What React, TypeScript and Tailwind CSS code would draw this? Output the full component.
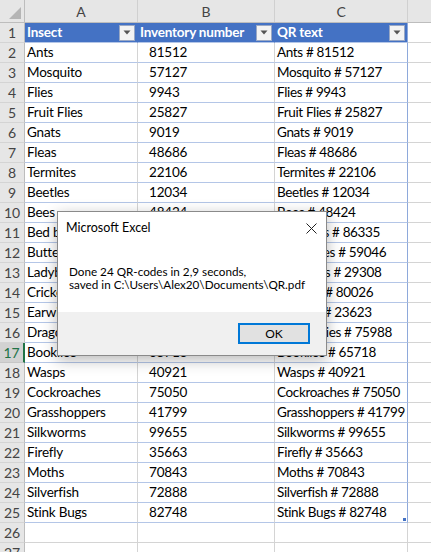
import React from "react";

const rows: [string, string][] = [
  ["Ants", "81512"],
  ["Mosquito", "57127"],
  ["Flies", "9943"],
  ["Fruit Flies", "25827"],
  ["Gnats", "9019"],
  ["Fleas", "48686"],
  ["Termites", "22106"],
  ["Beetles", "12034"],
  ["Bees", "48424"],
  ["Bed bugs", "86335"],
  ["Butterflies", "59046"],
  ["Ladybugs", "29308"],
  ["Crickets", "80026"],
  ["Earwigs", "23623"],
  ["Dragonflies", "75988"],
  ["Booklice", "65718"],
  ["Wasps", "40921"],
  ["Cockroaches", "75050"],
  ["Grasshoppers", "41799"],
  ["Silkworms", "99655"],
  ["Firefly", "35663"],
  ["Moths", "70843"],
  ["Silverfish", "72888"],
  ["Stink Bugs", "82748"],
];

const cellFont = { fontFamily: "Lato, 'Open Sans', sans-serif" };

function FilterButton() {
  return (
    <div className="flex h-[16px] w-[16px] shrink-0 items-center justify-center border border-[#9aa8c4] bg-[#f3f3f3]">
      <svg width="8" height="5" viewBox="0 0 8 5">
        <path d="M0.5 0.5 L7.5 0.5 L4 4.5 Z" fill="#555" />
      </svg>
    </div>
  );
}

function RowHead({ n, active }: { n: number; active?: boolean }) {
  return (
    <div
      className={
        "flex h-full w-[25px] shrink-0 items-center justify-center border-b border-r text-[14px] " +
        (active
          ? "border-b-[#c6c6c6] border-r-[#217346] border-r-2 bg-[#d2d2d2] text-[#217346]"
          : "border-b-[#d4d4d4] border-r-[#bdbdbd] bg-[#e6e6e6] text-[#444]")
      }
    >
      {n}
    </div>
  );
}

function Dialog() {
  return (
    <div
      className="absolute left-[57px] top-[211px] flex h-[145px] w-[270px] flex-col border border-[#8a8a8a] bg-white tracking-normal shadow-[0_4px_14px_rgba(0,0,0,0.28)]"
      style={{ fontFamily: "Lato, 'Noto Sans', sans-serif" }}
    >
      <div className="flex h-[28px] items-center justify-between pl-[8px] pr-[9px] pt-[4px]">
        <span className="text-[12.5px] text-black">Microsoft Excel</span>
        <svg width="11" height="11" viewBox="0 0 11 11">
          <path d="M0.5 0.5 L10.5 10.5 M10.5 0.5 L0.5 10.5" stroke="#222" strokeWidth="1" />
        </svg>
      </div>
      <div className="flex flex-1 flex-col justify-center pl-[11px] pt-[3px] text-[11.7px] leading-[13px] text-black">
        <div>Done 24 QR-codes in 2,9 seconds,</div>
        <div>saved in C:\Users\Alex20\Documents\QR.pdf</div>
      </div>
      <div className="flex h-[43px] items-center justify-end bg-[#f0f0f0] pr-[16px]">
        <div className="flex h-[21px] w-[72px] items-center justify-center border-2 border-[#0078d7] bg-[#e1e1e1] text-[12px] text-black">
          OK
        </div>
      </div>
    </div>
  );
}

const cell = "flex shrink-0 items-center overflow-hidden whitespace-nowrap border-b border-r";

export default function App() {
  return (
    <div className="relative h-[552px] w-[431px] overflow-hidden bg-white tracking-[-0.2px]" style={cellFont}>
      {/* column headers */}
      <div className="flex h-[23px] border-b border-[#bdbdbd] bg-[#e6e6e6] text-[14px] text-[#444]">
        <div className="relative w-[25px] shrink-0 border-r border-[#bdbdbd]">
          <svg className="absolute bottom-[3px] right-[3px]" width="12" height="12" viewBox="0 0 12 12">
            <path d="M12 0 L12 12 L0 12 Z" fill="#b5b5b5" />
          </svg>
        </div>
        <div className="flex w-[113px] shrink-0 items-center justify-center border-r border-[#d0d0d0]">A</div>
        <div className="flex w-[137px] shrink-0 items-center justify-center border-r border-[#d0d0d0]">B</div>
        <div className="flex w-[133px] shrink-0 items-center justify-center border-r border-[#d0d0d0]">C</div>
        <div className="flex-1" />
      </div>

      {/* header row */}
      <div className="flex h-[20px] text-[13.5px]">
        <RowHead n={1} />
        <div className={cell + " w-[113px] justify-between border-b-[#b4c6e7] border-r-[#4472c4] bg-[#4472c4] px-[2px] font-bold text-white"}>
          <span>Insect</span>
          <FilterButton />
        </div>
        <div className={cell + " w-[137px] justify-between border-b-[#b4c6e7] border-r-[#4472c4] bg-[#4472c4] px-[2px] font-bold text-white"}>
          <span>Inventory number</span>
          <FilterButton />
        </div>
        <div className={cell + " w-[133px] justify-between border-b-[#b4c6e7] border-r-[#8ea9db] bg-[#4472c4] px-[2px] font-bold text-white"}>
          <span>QR text</span>
          <FilterButton />
        </div>
        <div className="flex-1 border-b border-[#d4d4d4]" />
      </div>

      {rows.map(([name, num], i) => {
        const n = i + 2;
        const last = n === 25;
        return (
          <div key={n} className="flex h-[20px] text-[13.5px] text-black">
            <RowHead n={n} active={n === 17} />
            <div className={cell + " w-[113px] border-b-[#b4c6e7] border-r-[#d4d4d4] pl-[2px]"}>{name}</div>
            <div className={cell + " w-[137px] border-b-[#b4c6e7] border-r-[#d4d4d4] pl-[11px]"}>{num}</div>
            <div className={cell + " relative w-[133px] border-b-[#b4c6e7] border-r-[#8ea9db] pl-[2px] tracking-[-0.35px]"}>
              {name} # {num}
              {last && <div className="absolute bottom-[1px] right-[1px] h-[3px] w-[3px] bg-[#4472c4]" />}
            </div>
            <div className="flex-1 border-b border-[#d4d4d4]" />
          </div>
        );
      })}

      {[26, 27].map((n) => (
        <div key={n} className="flex h-[20px] text-[14px]">
          <RowHead n={n} />
          <div className="w-[113px] shrink-0 border-b border-r border-[#d4d4d4]" />
          <div className="w-[137px] shrink-0 border-b border-r border-[#d4d4d4]" />
          <div className="w-[133px] shrink-0 border-b border-r border-[#d4d4d4]" />
          <div className="flex-1 border-b border-[#d4d4d4]" />
        </div>
      ))}

      <Dialog />
    </div>
  );
}
